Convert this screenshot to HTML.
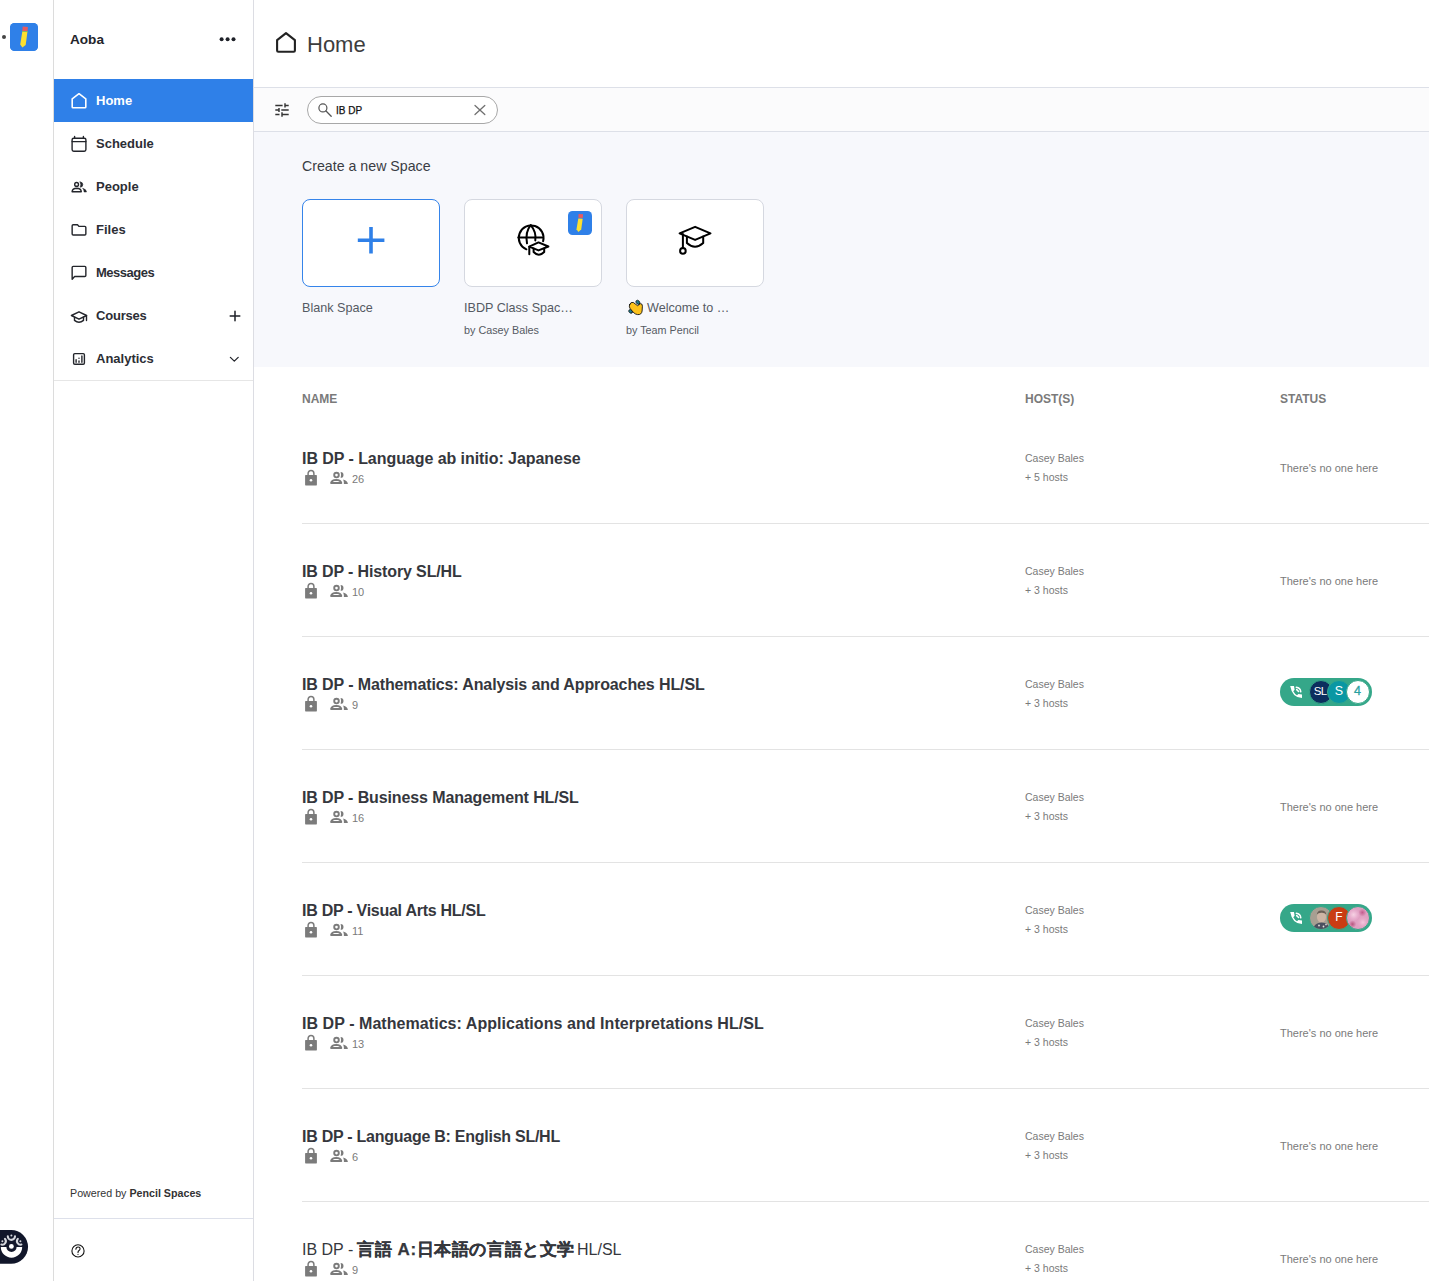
<!DOCTYPE html>
<html><head><meta charset="utf-8">
<style>
*{box-sizing:border-box;margin:0;padding:0}
html,body{width:1429px;height:1281px;overflow:hidden;background:#fff;font-family:"Liberation Sans",sans-serif;color:#222}
.abs{position:absolute}
#rail{position:absolute;left:0;top:0;width:54px;height:1281px;background:#fff;border-right:1px solid #dcdcdc}
#side{position:absolute;left:54px;top:0;width:200px;height:1281px;background:#fff;border-right:1px solid #dcdde3}
.nav{position:absolute;left:0;width:199px;height:43px}
.nav .lbl{position:absolute;left:42px;top:0;line-height:43px;font-size:13px;font-weight:700;color:#2c2e35}
.nav svg{position:absolute;left:16px;top:13px}
.nav.active{background:#2f80e8}
.nav.active .lbl{color:#fff}
#main{position:absolute;left:254px;top:0;width:1175px;height:1281px}
#hdr{position:absolute;left:0;top:0;width:1175px;height:88px;border-bottom:1px solid #dde0e8;background:#fff}
#filter{position:absolute;left:0;top:88px;width:1175px;height:44px;background:#fbfbfc;border-bottom:1px solid #dde0e8}
#create{position:absolute;left:0;top:132px;width:1175px;height:235px;background:#f7f8fc}
.card{position:absolute;top:67px;width:138px;height:88px;background:#fff;border:1px solid #d5d8e0;border-radius:8px}
.clbl{position:absolute;top:169px;font-size:12.6px;color:#555a63;white-space:nowrap}
.csub{position:absolute;top:192px;font-size:10.8px;color:#555a63;white-space:nowrap}
.th{position:absolute;top:392px;font-size:12px;font-weight:700;color:#7a7a7a;letter-spacing:0}
.row{position:absolute;left:48px;width:1127px;height:113px;border-bottom:1px solid #e3e3e3}
.title{position:absolute;left:0;top:0;font-size:16px;font-weight:700;color:#35373d;white-space:nowrap}
.host{position:absolute;left:723px;font-size:10.5px;color:#7a7a7a;line-height:19px;white-space:nowrap}
.cnt{position:absolute;left:50px;font-size:11px;color:#7a7a7a}
.pill{position:absolute;left:978px;width:92px;height:28px;border-radius:14px;background:#35a789}
.av{position:absolute;top:2px;width:24px;height:24px;border-radius:50%;border:1.2px solid #35a789;color:#fff;font-size:11.5px;line-height:21.6px;text-align:center;overflow:hidden}
.status{position:absolute;left:978px;font-size:11px;color:#7a7a7a;white-space:nowrap}
</style></head><body>
<div id="rail">
  <div class="abs" style="left:2px;top:35px;width:4px;height:4px;border-radius:50%;background:#444"></div>
  <div class="abs" style="left:10px;top:23px;width:28px;height:28px;border-radius:5px;background:#2f80e8"></div>
</div>
<div id="side">
  <div class="abs" style="left:16px;top:32px;font-size:13.6px;font-weight:700;color:#23252b">Aoba</div>
  <div class="nav active" style="top:79px"><span class="lbl">Home</span></div>
  <div class="nav" style="top:122px"><span class="lbl">Schedule</span></div>
  <div class="nav" style="top:165px"><span class="lbl">People</span></div>
  <div class="nav" style="top:208px"><span class="lbl">Files</span></div>
  <div class="nav" style="top:251px"><span class="lbl" style="letter-spacing:-0.5px">Messages</span></div>
  <div class="nav" style="top:294px"><span class="lbl" style="letter-spacing:-0.2px">Courses</span></div>
  <div class="nav" style="top:337px"><span class="lbl">Analytics</span></div>
  <div class="abs" style="left:0;top:380px;width:199px;height:1px;background:#e6e6e6"></div>
  <div class="abs" style="left:16px;top:1187px;font-size:10.7px;color:#333">Powered by <b>Pencil Spaces</b></div>
  <div class="abs" style="left:0;top:1218px;width:199px;height:1px;background:#dde0ea"></div>
</div>
<div id="main">
  <div id="hdr">
    <div class="abs" style="left:53px;top:32px;font-size:22px;color:#3d3d3d">Home</div>
  </div>
  <div id="filter">
    <div class="abs" style="left:53px;top:8px;width:191px;height:28px;border:1px solid #a8a8a8;border-radius:14px;background:#fff"></div>
    <div class="abs" style="left:82px;top:17px;font-size:10px;color:#111;-webkit-text-stroke:0.25px #111">IB DP</div>
  </div>
  <div id="create">
    <div class="abs" style="left:48px;top:26px;font-size:14.2px;color:#3a3d44">Create a new Space</div>
    <div class="card" style="left:48px;border-color:#3584ea"></div>
    <div class="card" style="left:210px"></div>
    <div class="card" style="left:372px"></div>
    <div class="clbl" style="left:48px">Blank Space</div>
    <div class="clbl" style="left:210px">IBDP Class Spac…</div>
    <div class="clbl" style="left:393px">Welcome to …</div>
    <div class="csub" style="left:210px">by Casey Bales</div>
    <div class="csub" style="left:372px">by Team Pencil</div>
  </div>
  <div class="th" style="left:48px">NAME</div>
  <div class="th" style="left:771px">HOST(S)</div>
  <div class="th" style="left:1026px">STATUS</div>
  <div class="row" style="top:411px">
    <div class="title" style="top:39px;letter-spacing:-0.057px">IB DP - Language ab initio: Japanese</div>
    <div class="cnt" style="top:62px">26</div>
    <div class="host" style="top:38px">Casey Bales<br>+ 5 hosts</div>
    <div class="status" style="top:51px">There's no one here</div>
  </div>
  <div class="row" style="top:524px">
    <div class="title" style="top:39px;letter-spacing:-0.13px">IB DP - History SL/HL</div>
    <div class="cnt" style="top:62px">10</div>
    <div class="host" style="top:38px">Casey Bales<br>+ 3 hosts</div>
    <div class="status" style="top:51px">There's no one here</div>
  </div>
  <div class="row" style="top:637px">
    <div class="title" style="top:39px;letter-spacing:-0.116px">IB DP - Mathematics: Analysis and Approaches HL/SL</div>
    <div class="cnt" style="top:62px">9</div>
    <div class="host" style="top:38px">Casey Bales<br>+ 3 hosts</div>
    <div class="pill pillA" style="top:41px">
      <div class="av" style="left:28.5px;background:#0c2f5e;font-size:11.5px;letter-spacing:-0.8px;text-indent:-1px">SL</div>
      <div class="av" style="left:47px;background:#0a97a3;font-size:12.5px">S</div>
      <div class="av" style="left:65.5px;background:#fff;color:#2a9fa0;font-size:12.5px;-webkit-text-stroke:0.3px #2a9fa0">4</div>
    </div>
  </div>
  <div class="row" style="top:750px">
    <div class="title" style="top:39px;letter-spacing:-0.118px">IB DP - Business Management HL/SL</div>
    <div class="cnt" style="top:62px">16</div>
    <div class="host" style="top:38px">Casey Bales<br>+ 3 hosts</div>
    <div class="status" style="top:51px">There's no one here</div>
  </div>
  <div class="row" style="top:863px">
    <div class="title" style="top:39px;letter-spacing:-0.26px">IB DP - Visual Arts HL/SL</div>
    <div class="cnt" style="top:62px">11</div>
    <div class="host" style="top:38px">Casey Bales<br>+ 3 hosts</div>
    <div class="pill pillB" style="top:41px">
      <div class="av" style="left:28.5px;background:#a79f92"><svg width="22" height="22" viewBox="0 0 22 22" style="position:absolute;left:0;top:0"><ellipse cx="11.5" cy="10" rx="4.6" ry="5.6" fill="#cdb5a5"/><path d="M6.8 7.5 Q7.5 3.2 11.5 3.5 Q15.8 3.4 16.3 7.6 Q14.5 5.6 11.5 5.8 Q8.3 5.7 6.8 7.5Z" fill="#6b6058"/><path d="M3 22 Q4.5 15.8 11.5 15.6 Q18.5 15.8 20 22Z" fill="#4b5060"/><circle cx="9" cy="18.5" r="0.9" fill="#e8e4dc"/><circle cx="13.5" cy="19.5" r="0.9" fill="#e8e4dc"/><circle cx="16" cy="17.6" r="0.8" fill="#e8e4dc"/></svg></div>
      <div class="av" style="left:47px;background:#c93c13;font-size:12px">F</div>
      <div class="av" style="left:65.5px;background:radial-gradient(circle at 30% 35%,#f6d2e4 0,#e9b0cf 18%,transparent 30%),radial-gradient(circle at 72% 70%,#f3c7de 0,#e6a9c8 16%,transparent 28%),radial-gradient(circle at 70% 25%,#c25d8e 0,transparent 18%),radial-gradient(circle at 25% 78%,#b8557f 0,transparent 16%),#e0a0c2"></div>
    </div>
  </div>
  <div class="row" style="top:976px">
    <div class="title" style="top:39px;letter-spacing:0.053px">IB DP - Mathematics: Applications and Interpretations HL/SL</div>
    <div class="cnt" style="top:62px">13</div>
    <div class="host" style="top:38px">Casey Bales<br>+ 3 hosts</div>
    <div class="status" style="top:51px">There's no one here</div>
  </div>
  <div class="row" style="top:1089px">
    <div class="title" style="top:39px;letter-spacing:-0.256px">IB DP - Language B: English SL/HL</div>
    <div class="cnt" style="top:62px">6</div>
    <div class="host" style="top:38px">Casey Bales<br>+ 3 hosts</div>
    <div class="status" style="top:51px">There's no one here</div>
  </div>
  <div class="row" style="top:1202px">
    <div class="title" style="top:39px;width:330px;height:20px"><span style="position:absolute;left:0;top:0;font-weight:400">IB DP -</span><span style="position:absolute;left:55px;top:-3px;font-size:17px;letter-spacing:0.6px;-webkit-text-stroke:0.25px #35373d">言語 A:日本語の言語と文学</span><span style="position:absolute;left:275px;top:0;font-weight:400">HL/SL</span></div>
    <div class="cnt" style="top:62px">9</div>
    <div class="host" style="top:38px">Casey Bales<br>+ 3 hosts</div>
    <div class="status" style="top:51px">There's no one here</div>
  </div>
</div>
<svg class="abs" style="left:0;top:0;pointer-events:none" width="1429" height="1281" viewBox="0 0 1429 1281" fill="none" stroke-linecap="round" stroke-linejoin="round">
  <defs>
  <g id="rowicons">
    <rect x="305.1" y="475.1" width="11.8" height="10.3" rx="0.6" fill="#7b7b7b"/>
    <path d="M308.1 475.5 V473.4 A2.9 2.9 0 0 1 313.9 473.4 V475.5" stroke="#7b7b7b" stroke-width="1.5"/>
    <circle cx="311" cy="480.3" r="1.3" fill="#fff"/>
    <circle cx="336.5" cy="475.1" r="2.3" stroke="#7b7b7b" stroke-width="1.9"/>
    <path d="M340.6 472 A2.9 2.9 0 0 1 340.6 477.8 Q341.6 474.9 340.6 472 Z" fill="#7b7b7b"/>
    <path d="M331.1 483 Q331.7 480.1 336.2 479.9 Q340.7 480.1 341.3 483 Z" stroke="#7b7b7b" stroke-width="1.9"/>
    <path d="M343.2 479.5 Q347.6 480.5 347.9 484 H343.9 Q343.9 481.4 343.2 479.5 Z" fill="#7b7b7b"/>
  </g>
  <g id="phone">
    <path d="M1290.2 686 H1294 L1294.6 689.7 L1293.3 691.2 Q1294.7 693.9 1297 695.2 L1298.4 693.9 L1302 694.4 V698 Q1292.2 697.8 1290.2 686 Z" fill="#fff"/>
    <path d="M1296.3 687.3 Q1300.3 687.8 1300.8 691.8 M1296.7 689.6 L1298.6 691.5" stroke="#fff" stroke-width="1.5"/>
  </g>
  </defs>
  <use href="#rowicons" transform="translate(0,0)"/>
  <use href="#rowicons" transform="translate(0,113)"/>
  <use href="#rowicons" transform="translate(0,226)"/>
  <use href="#rowicons" transform="translate(0,339)"/>
  <use href="#rowicons" transform="translate(0,452)"/>
  <use href="#rowicons" transform="translate(0,565)"/>
  <use href="#rowicons" transform="translate(0,678)"/>
  <use href="#rowicons" transform="translate(0,791)"/>
  <use href="#phone"/>
  <use href="#phone" transform="translate(0,226)"/>
  <!-- rail app icon -->
  <rect x="10" y="23" width="28" height="28" rx="4.5" fill="#2f80e8"/>
  <path d="M22.3 31.8 L27.4 32.1 L25.7 44.9 L22.4 47.6 L20.2 44.6 Z" fill="#fde02f"/>
  <path d="M22.7 26.6 L27.9 27 L27.5 31.2 L22.3 30.9 Z" fill="#e85a5f"/>
  <path d="M22.4 31.4 L27.5 31.7" stroke="#9bc93c" stroke-width="0.8"/>
  <!-- more dots -->
  <circle cx="221.6" cy="39.2" r="2" fill="#1e2128"/>
  <circle cx="227.6" cy="39.2" r="2" fill="#1e2128"/>
  <circle cx="233.5" cy="39.2" r="2" fill="#1e2128"/>
  <!-- sidebar icons -->
  <path d="M72.2 98.8 L79 93.7 L85.8 98.8 V107 Q85.8 107.8 85 107.8 H73 Q72.2 107.8 72.2 107 Z" stroke="#fff" stroke-width="1.6"/>
  <g stroke="#23252b" stroke-width="1.4">
    <rect x="72.1" y="138.2" width="13.8" height="13" rx="1.6"/>
    <path d="M72.1 141.6 H85.9 M74.6 136.5 V138.3 M83.4 136.5 V138.3"/>
    <circle cx="76.6" cy="184.4" r="1.9"/>
    <path d="M80.2 182 A2.6 2.6 0 0 1 80.2 187.2 Q81.4 184.6 80.2 182 Z" fill="#23252b" stroke-width="0.6"/>
    <path d="M72.1 191.7 Q72.5 188.4 76.7 188.3 Q80.9 188.4 81.3 191.7 Z"/>
    <path d="M83 188.4 Q86.3 189.2 86.5 192 H84.1 Q84 189.8 83 188.4 Z" fill="#23252b" stroke-width="0.5"/>
    <path d="M72.15 225.8 Q72.15 224.75 73.2 224.75 H77.5 L78.9 226.35 H84.8 Q85.85 226.35 85.85 227.4 V233.9 Q85.85 234.95 84.8 234.95 H73.2 Q72.15 234.95 72.15 233.9 Z"/>
    <path d="M72.15 279.3 V267.4 Q72.15 266.35 73.2 266.35 H84.8 Q85.85 266.35 85.85 267.4 V275.5 Q85.85 276.55 84.8 276.55 H74.6 Z"/>
    <path d="M71.4 315.5 L79 311.8 L86.6 315.5 L79 319.2 Z"/>
    <path d="M74.5 317.3 V320.4 Q79 324.3 83.5 320.4 V317.3 M86.5 315.6 V320.5"/>
    <rect x="73.6" y="353.6" width="10.8" height="10.7" rx="1.2"/>
    <path d="M76.1 359.7 V362.2 M79 358.1 V358.2 M79 360.9 V362.2 M81.9 356 V362.2"/>
    <path d="M235 311.2 V320.8 M230.2 316 H239.8" stroke-width="1.5" stroke="#1e2128"/>
    <path d="M230.4 357.4 L234.3 361.1 L238.2 357.4" stroke-width="1.3"/>
  </g>
  <!-- help icon -->
  <circle cx="78" cy="1250.9" r="6.1" stroke="#111" stroke-width="1.1"/>
  <path d="M75.9 1249.2 Q76 1247 78.1 1247 Q80.1 1247 80.1 1248.8 Q80.1 1250 78.8 1250.7 Q78 1251.2 78 1252.4" stroke="#111" stroke-width="1.1"/>
  <circle cx="78" cy="1254.3" r="0.6" fill="#111"/>
  <!-- cookie badge -->
  <path d="M0 1230 H11.2 A16.8 16.8 0 0 1 11.2 1263.7 H0 Z" fill="#11162a"/>
  <path d="M0.8 1247 A10.7 10.7 0 0 0 22.2 1247 H16.6 A5.1 5.1 0 0 1 6.4 1247 Z" fill="#fff"/>
  <circle cx="11.4" cy="1246.4" r="2.4" fill="#fff"/>
  <path d="M7.8 1236.3 A3.6 3.6 0 0 0 15 1236.3" stroke="#d4d6dc" stroke-width="2.1"/><circle cx="11.4" cy="1235.4" r="1" fill="#d4d6dc"/>
  <path d="M5 1238.8 A3.6 3.6 0 0 1 1.4 1244.6" stroke="#d4d6dc" stroke-width="2.1"/><circle cx="2.4" cy="1241.2" r="1" fill="#d4d6dc"/>
  <path d="M17.8 1238.8 A3.6 3.6 0 0 0 21.4 1244.6" stroke="#d4d6dc" stroke-width="2.1"/><circle cx="20.4" cy="1241.2" r="1" fill="#d4d6dc"/>
  <!-- header home -->
  <path d="M277.1 40.2 L286 33.2 L294.9 40.2 V50.6 Q294.9 51.8 293.7 51.8 H278.3 Q277.1 51.8 277.1 50.6 Z" stroke="#222" stroke-width="2.1"/>
  <!-- filter icon -->
  <g stroke="#333" stroke-width="1.45" stroke-linecap="butt">
    <path d="M275.3 105.4 H282.6 M285 103.3 V107.5 M285 105.4 H288.7"/>
    <path d="M275.3 110 H279 M279 108 V112 M281.3 110 H288.7"/>
    <path d="M275.3 114.5 H279.5 M282 112.3 V116.7 M282 114.5 H288.7"/>
  </g>
  <!-- search icon -->
  <circle cx="322.9" cy="107.9" r="4" stroke="#555" stroke-width="1.2"/>
  <path d="M326 111 L331.2 116.2" stroke="#555" stroke-width="1.3"/>
  <!-- clear x -->
  <path d="M475 105.5 L484.8 114.6 M484.8 105.5 L475 114.6" stroke="#707070" stroke-width="1.3"/>
  <!-- blank plus -->
  <path d="M371 227 V253.5 M357.8 240.2 H384.4" stroke="#2f80e8" stroke-width="3.6" stroke-linecap="butt"/>
  <!-- globe with cap -->
  <g stroke="#000" stroke-width="2">
    <path d="M526.4 249.3 A12.4 12.4 0 1 1 543.1 241.2"/>
    <path d="M518.3 237.6 H542.9"/>
    <path d="M530.7 225.2 Q525 232 527 243.3"/>
    <path d="M530.7 225.2 Q536.5 232 535.3 240.4"/>
    <path d="M529.2 246.6 L538.5 242.4 L548.4 246.5 L538.5 250.4 Z"/>
    <path d="M533.6 248.6 V252 Q538.8 257.5 544.2 252 V248.6 M529.3 246.8 V254.2"/>
  </g>
  <!-- grad cap -->
  <g stroke="#000" stroke-width="2">
    <path d="M679.6 233.4 L695.1 226.8 L710.5 233.4 L695.1 239.9 Z"/>
    <path d="M686.9 236.6 V243 Q695 250.5 703.2 243 V236.6"/>
    <path d="M682.9 234 V248.2"/>
    <circle cx="682.9" cy="250.9" r="2.8"/>
  </g>
  <!-- badge in card 2 -->
  <rect x="568" y="211" width="24" height="24" rx="4.5" fill="#2f80e8"/>
  <path d="M578.3 218.4 L582.7 218.7 L581.2 229.6 L578.4 231.9 L576.5 229.3 Z" fill="#fde02f"/>
  <path d="M578.6 214 L583.1 214.3 L582.7 217.9 L578.3 217.7 Z" fill="#e85a5f"/>
  <!-- wave emoji -->
  <ellipse cx="637.9" cy="302.3" rx="2.3" ry="1.7" transform="rotate(45 637.9 302.3)" fill="#1d7b8d" stroke="#111" stroke-width="0.7"/>
  <ellipse cx="630.6" cy="311.4" rx="2.1" ry="1.6" transform="rotate(45 630.6 311.4)" fill="#1d7b8d" stroke="#111" stroke-width="0.7"/>
  <path d="M629.6 304.6 Q630.6 301.8 633.2 302.4 L637.6 305.7 L640.3 303.7 Q642.6 303.5 642.4 306.2 L642.1 311 Q641.6 314.9 637.6 314.6 Q635.1 314.4 633.1 312.1 L629.9 308.2 Q628.8 306.2 629.6 304.6 Z" fill="#fcc21b" stroke="#111" stroke-width="0.9"/>
</svg>

</body></html>
